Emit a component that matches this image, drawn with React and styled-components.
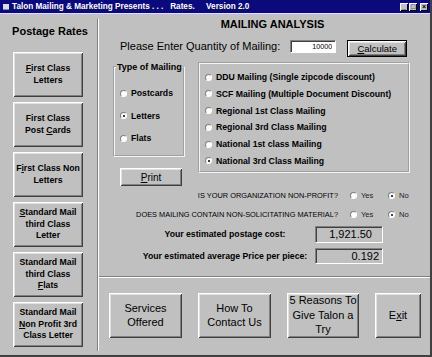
import React from 'react';
import styled, { createGlobalStyle } from 'styled-components';

const face = '#c0c0c0';
const shadow = '#808080';
const dark = '#404040';
const navy = '#0a0a7c';

const GlobalStyle = createGlobalStyle`
  html, body {
    margin: 0;
    padding: 0;
    background: ${face};
  }
  body {
    font-family: 'Liberation Sans', Arial, sans-serif;
    color: #000;
  }
`;

const Window = styled.div`
  width: 432px;
  height: 357px;
  box-sizing: border-box;
  display: flex;
  flex-direction: column;
  background: ${face};
  border-right: 2px solid ${dark};
  border-bottom: 2px solid ${dark};
  overflow: hidden;
`;

const TitleBar = styled.div`
  height: 13px;
  flex-shrink: 0;
  display: flex;
  align-items: center;
  padding: 0 2px 0 3px;
  background: ${navy};
  border-bottom: 1px solid #e4e4e4;
`;

const TitleIcon = styled.span`
  width: 6px;
  height: 5px;
  background: #dcdcdc;
  border-bottom: 1px solid #6a8ad8;
`;

const TitleText = styled.span`
  margin-left: 3px;
  font-size: 8.2px;
  font-weight: bold;
  color: #fff;
  white-space: pre;
`;

const Controls = styled.div`
  margin-left: auto;
  display: flex;
  gap: 1px;
`;

const CtlButton = styled.span`
  width: 8px;
  height: 8px;
  box-sizing: border-box;
  margin-left: ${(p) => (p.$gap ? '2px' : '0')};
  background: ${face};
  box-shadow: inset 1px 1px #fff, inset -1px -1px #000;
  font-size: 7px;
  line-height: 8px;
  text-align: center;
  font-weight: bold;
  color: #000;
`;

const Body = styled.div`
  flex: 1;
  display: flex;
  min-height: 0;
`;

const Sidebar = styled.div`
  width: 97px;
  flex-shrink: 0;
  display: flex;
  flex-direction: column;
  padding-top: 11px;
  box-sizing: border-box;
`;

const SideTitle = styled.div`
  font-size: 11px;
  font-weight: bold;
  line-height: 13px;
  text-align: center;
  padding-left: 3px;
`;

const SideButtons = styled.div`
  display: flex;
  flex-direction: column;
  gap: 5px;
  margin: 14px 0 0 13px;
`;

const Bevel = styled.button`
  margin: 0;
  padding: 0;
  border: none;
  background: ${face};
  font-family: inherit;
  color: #000;
  box-sizing: border-box;
  box-shadow: inset 1px 1px #fff, inset -1px -1px ${dark}, inset 2px 2px #e2e2e2,
    inset -2px -2px ${shadow};
  cursor: default;
`;

const RateButton = styled(Bevel)`
  width: 70px;
  height: 45px;
  font-size: 8.7px;
  font-weight: bold;
  line-height: 11.5px;
`;

const VRule = styled.div`
  width: 0;
  flex-shrink: 0;
  border-left: 1px solid ${shadow};
  border-right: 1px solid #fff;
  margin: 5px 0 4px;
`;

const Main = styled.div`
  flex: 1;
  display: flex;
  flex-direction: column;
  min-width: 0;
`;

const Analysis = styled.div`
  display: flex;
  flex-direction: column;
  padding-top: 4px;
`;

const Heading = styled.div`
  font-size: 11px;
  font-weight: bold;
  line-height: 13px;
  text-align: center;
  padding-left: 16px;
`;

const QtyRow = styled.div`
  display: flex;
  align-items: flex-start;
  margin-top: 9px;
  padding-left: 21px;
`;

const QtyLabel = styled.span`
  font-size: 11px;
  line-height: 13px;
`;

const QtyInput = styled.input`
  width: 46px;
  height: 13px;
  box-sizing: border-box;
  margin: 0 0 0 10px;
  padding: 0 3px 0 0;
  background: #fff;
  border: 1px solid;
  border-color: ${shadow} #fff #fff ${shadow};
  box-shadow: inset 1px 1px ${dark};
  font-family: inherit;
  font-size: 7.2px;
  text-align: right;
  outline: none;
`;

const SmallButton = styled(Bevel)`
  width: ${(p) => p.$w}px;
  height: ${(p) => p.$h}px;
  font-size: 9.5px;
  border: ${(p) => (p.$default ? '1px solid #000' : 'none')};
`;

const CalcButton = styled(SmallButton)`
  margin-left: 11px;
`;

const Panels = styled.div`
  display: grid;
  grid-template-columns: 72px 212px;
  column-gap: 13px;
  align-items: start;
  margin-top: 5px;
  padding-left: 14px;
`;

const LeftCol = styled.div`
  display: flex;
  flex-direction: column;
  align-items: flex-start;
`;

const TypeBox = styled.fieldset`
  width: 72px;
  height: 95px;
  box-sizing: border-box;
  margin: 0;
  min-width: 0;
  padding: 15px 0 0 5px;
  border: 2px groove #f4f4f4;
  display: flex;
  flex-direction: column;
  gap: 10.5px;
`;

const Legend = styled.legend`
  font-size: 9px;
  font-weight: bold;
  line-height: 10px;
  padding: 0 1px;
  margin-left: -4px;
`;

const OptionsBox = styled.div`
  height: 111px;
  box-sizing: border-box;
  border: 2px groove #f4f4f4;
  padding: 7px 0 0 5px;
  display: flex;
  flex-direction: column;
  gap: 4.8px;
`;

const Option = styled.label`
  display: flex;
  align-items: center;
  height: 12px;
  font-size: 8.7px;
  font-weight: bold;
  line-height: 12px;
  white-space: nowrap;
`;

const Dot = styled.span`
  position: relative;
  width: 7px;
  height: 7px;
  box-sizing: border-box;
  flex-shrink: 0;
  margin-right: 4px;
  border-radius: 50%;
  border: 1px solid;
  border-color: ${shadow} #fff #fff ${shadow};
  background: #fff;
  &::after {
    content: '';
    display: ${(p) => (p.$on ? 'block' : 'none')};
    position: absolute;
    left: 1.5px;
    top: 1.5px;
    width: 2px;
    height: 2px;
    border-radius: 50%;
    background: #000;
  }
`;

const PrintButton = styled(SmallButton)`
  margin: 11px 0 0 7px;
  font-size: 10px;
`;

const Questions = styled.div`
  display: grid;
  grid-template-columns: 250px 38px auto;
  grid-auto-rows: 11px;
  row-gap: 8px;
  margin-top: 4px;
`;

const Question = styled.span`
  font-size: 7.4px;
  line-height: 11px;
  text-align: right;
  padding-right: 11px;
  white-space: nowrap;
`;

const Answer = styled.label`
  display: flex;
  align-items: center;
  padding-left: 1px;
  font-size: 7.6px;
  line-height: 11px;
  color: #222;
`;

const Costs = styled.div`
  display: grid;
  grid-template-columns: 216px 68px;
  grid-template-rows: 17px 16px;
  row-gap: 5px;
  margin-top: 5.5px;
  margin-bottom: 12px;
`;

const CostLabel = styled.span`
  align-self: center;
  font-size: 8.7px;
  font-weight: bold;
  text-align: center;
  padding-left: 36px;
  white-space: nowrap;
`;

const CostBox = styled.div`
  box-sizing: border-box;
  border: 1px solid;
  border-color: ${shadow} #fff #fff ${shadow};
  box-shadow: inset 1px 1px ${dark};
  padding-right: ${(p) => p.$pad}px;
  font-size: 11px;
  display: flex;
  align-items: center;
  justify-content: flex-end;
`;

const HRule = styled.div`
  border-top: 1px solid ${shadow};
  border-bottom: 1px solid #fff;
`;

const Footer = styled.div`
  flex: 1;
  display: flex;
  align-items: flex-start;
  gap: 16px;
  padding: 15px 0 0 10px;
`;

const FooterButton = styled(Bevel)`
  width: ${(p) => p.$w}px;
  height: 45px;
  font-size: 11px;
  line-height: 14.5px;
`;

const rates = [
  [<><u>F</u>irst Class</>, 'Letters'],
  ['First Class', <>Post <u>C</u>ards</>],
  [<>F<u>i</u>rst Class Non</>, 'Letters'],
  [<><u>S</u>tandard Mail</>, 'third Class', 'Letter'],
  ['Standard Mail', 'third Class', <><u>F</u>lats</>],
  ['Standard Mail', <><u>N</u>on Profit 3rd</>, 'Class Letter'],
];

const mailings = [
  ['DDU Mailing (Single zipcode discount)', false],
  ['SCF Mailing (Multiple Document Discount)', false],
  ['Regional 1st Class Mailing', false],
  ['Regional 3rd Class Mailing', false],
  ['National 1st class Mailing', false],
  ['National 3rd Class Mailing', true],
];

const types = [
  ['Postcards', false],
  ['Letters', true],
  ['Flats', false],
];

const questions = [
  'IS YOUR ORGANIZATION NON-PROFIT?',
  'DOES MAILING CONTAIN NON-SOLICITATING MATERIAL?',
];

const Lines = ({ lines }) =>
  lines.map((l, i) => (
    <React.Fragment key={i}>
      {i > 0 && <br />}
      {l}
    </React.Fragment>
  ));

export default function App() {
  return (
    <>
      <GlobalStyle />
      <Window>
        <TitleBar>
          <TitleIcon />
          <TitleText>
            {'Talon Mailing & Marketing Presents . . .   Rates.     Version 2.0'}
          </TitleText>
          <Controls>
            <CtlButton>_</CtlButton>
            <CtlButton>□</CtlButton>
            <CtlButton $gap>×</CtlButton>
          </Controls>
        </TitleBar>
        <Body>
          <Sidebar>
            <SideTitle>Postage Rates</SideTitle>
            <SideButtons>
              {rates.map((lines, i) => (
                <RateButton key={i}>
                  <Lines lines={lines} />
                </RateButton>
              ))}
            </SideButtons>
          </Sidebar>
          <VRule />
          <Main>
            <Analysis>
              <Heading>MAILING ANALYSIS</Heading>
              <QtyRow>
                <QtyLabel>Please Enter Quantity of Mailing:</QtyLabel>
                <QtyInput readOnly value="10000" />
                <CalcButton $w={60} $h={17} $default>
                  <u>C</u>alculate
                </CalcButton>
              </QtyRow>
              <Panels>
                <LeftCol>
                  <TypeBox>
                    <Legend>Type of Mailing</Legend>
                    {types.map(([t, on]) => (
                      <Option key={t}>
                        <Dot $on={on} />
                        {t}
                      </Option>
                    ))}
                  </TypeBox>
                  <PrintButton $w={62} $h={18}>
                    <u>P</u>rint
                  </PrintButton>
                </LeftCol>
                <OptionsBox>
                  {mailings.map(([t, on]) => (
                    <Option key={t}>
                      <Dot $on={on} />
                      {t}
                    </Option>
                  ))}
                </OptionsBox>
              </Panels>
              <Questions>
                {questions.map((q) => (
                  <React.Fragment key={q}>
                    <Question>{q}</Question>
                    <Answer>
                      <Dot />
                      Yes
                    </Answer>
                    <Answer>
                      <Dot $on />
                      No
                    </Answer>
                  </React.Fragment>
                ))}
              </Questions>
              <Costs>
                <CostLabel>Your estimated postage cost:</CostLabel>
                <CostBox $pad={10}>1,921.50</CostBox>
                <CostLabel>Your estimated average Price per piece:</CostLabel>
                <CostBox $pad={3}>0.192</CostBox>
              </Costs>
            </Analysis>
            <HRule />
            <Footer>
              <FooterButton $w={73}>
                Services
                <br />
                Offered
              </FooterButton>
              <FooterButton $w={73}>
                How To
                <br />
                Contact Us
              </FooterButton>
              <FooterButton $w={72}>
                5 Reasons To
                <br />
                Give Talon a
                <br />
                Try
              </FooterButton>
              <FooterButton $w={46}>
                E<u>x</u>it
              </FooterButton>
            </Footer>
          </Main>
        </Body>
      </Window>
    </>
  );
}
